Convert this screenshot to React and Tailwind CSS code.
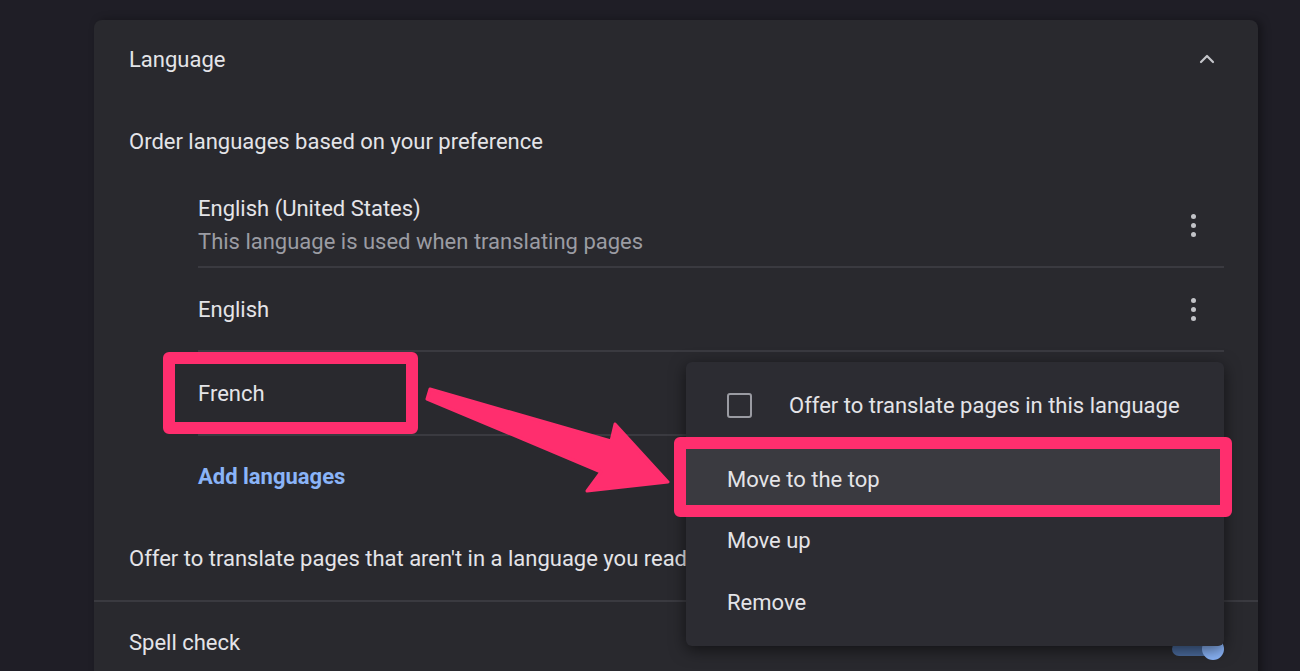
import React from 'react';
import { ChevronUp } from "lucide-react";

const PINK = "#ff2e6e";

function Dots() {
  return (
    <div className="flex flex-col items-center gap-[4px] w-[24px] mr-[19px]">
      <span className="w-[5px] h-[5px] rounded-full bg-[#c2c3c8]" />
      <span className="w-[5px] h-[5px] rounded-full bg-[#c2c3c8]" />
      <span className="w-[5px] h-[5px] rounded-full bg-[#c2c3c8]" />
    </div>
  );
}

function Toggle() {
  return (
    <div className="relative w-[50px] h-[14px] mt-[14px] mr-[2px] rounded-full bg-[#4a6a9c]">
      <span className="absolute right-[-2px] top-[-4px] w-[22px] h-[22px] rounded-full bg-[#8ab4f8]" />
    </div>
  );
}

const LanguageSettings = () => {
  return (
    <div
      className="relative w-[1300px] h-[671px] overflow-hidden bg-[#1f1e26] text-[22px] text-[#e4e4e8]"
      style={{ fontFamily: "Roboto, 'Liberation Sans', sans-serif" }}
    >
      {/* settings card */}
      <div className="ml-[94px] mt-[20px] w-[1164px] h-[700px] bg-[#29292e] rounded-t-[8px] shadow-[4px_0_8px_rgba(0,0,0,0.35)]">
        <div className="h-[78px] flex items-center justify-between pl-[35px] pr-[39px]">
          <span>Language</span>
          <ChevronUp className="w-[24px] h-[24px] text-[#c4c5ca]" strokeWidth={2.2} />
        </div>

        <div className="h-[86px] flex items-center pl-[35px]">
          Order languages based on your preference
        </div>

        <div className="ml-[104px] mr-[34px]">
          <div className="h-[82px] flex items-center justify-between">
            <div className="flex flex-col">
              <span className="leading-[30px]">English (United States)</span>
              <span className="leading-[30px] mt-[3px] text-[#9b9ca3]">This language is used when translating pages</span>
            </div>
            <Dots />
          </div>
          <div className="h-[84px] flex items-center justify-between border-t-2 border-[#3a3a40]">
            <span>English</span>
            <Dots />
          </div>
          <div className="h-[84px] flex items-center justify-between border-t-2 border-[#3a3a40]">
            <span>French</span>
            <Dots />
          </div>
          <div className="h-[82px] flex items-center border-t-2 border-[#3a3a40]">
            <span className="font-bold text-[#8ab4f8]">Add languages</span>
          </div>
        </div>

        <div className="h-[84px] flex items-center justify-between pl-[35px] pr-[34px]">
          <span>Offer to translate pages that aren't in a language you read</span>
          <Toggle />
        </div>

        <div className="h-[82px] flex items-center justify-between pl-[35px] pr-[34px] border-t-2 border-[#3a3a40]">
          <span>Spell check</span>
          <Toggle />
        </div>
      </div>

      {/* context menu */}
      <div className="absolute left-[686px] top-[362px] w-[538px] h-[284px] pt-[12px] bg-[#2c2c32] rounded-[6px] shadow-[0_4px_16px_rgba(0,0,0,0.55)]">
        <div className="h-[62px] flex items-center pl-[41px]">
          <span className="w-[25px] h-[25px] rounded-[3px] border-2 border-[#9a9ba2]" />
          <span className="ml-[37px]">Offer to translate pages in this language</span>
        </div>
        <div className="h-[60px] mt-[13px] flex items-center pl-[41px] bg-[#3a3a40]">
          Move to the top
        </div>
        <div className="h-[62px] flex items-center pl-[41px]">Move up</div>
        <div className="h-[62px] flex items-center pl-[41px]">Remove</div>
      </div>

      {/* annotations */}
      <div className="absolute left-[163px] top-[352px] w-[255px] h-[82px] border-[12px] rounded-[6px]" style={{ borderColor: PINK }} />
      <div className="absolute left-[674px] top-[437px] w-[558px] h-[80px] border-[12px] rounded-[6px]" style={{ borderColor: PINK }} />
      <svg className="absolute left-0 top-0 pointer-events-none" width="1300" height="671" viewBox="0 0 1300 671">
        <polygon
          points="430,389 611,441 615,424 668,482 587,491 601,472 427,399"
          fill={PINK}
          stroke={PINK}
          strokeWidth="3"
          strokeLinejoin="round"
        />
      </svg>
    </div>
  );
};

export default LanguageSettings;
